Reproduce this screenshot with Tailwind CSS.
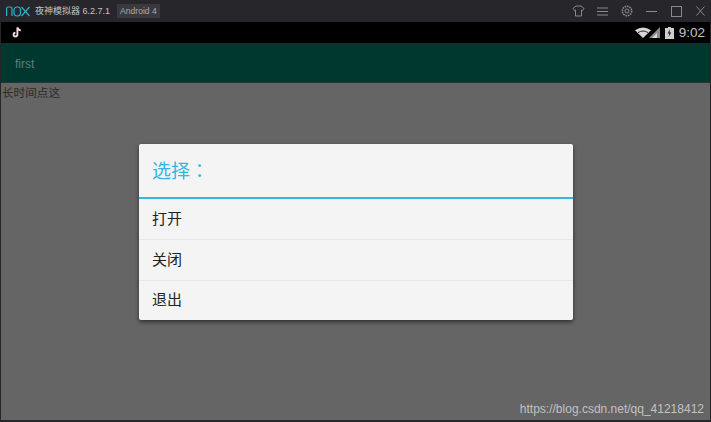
<!DOCTYPE html>
<html><head><meta charset="utf-8"><script src="https://cdn.jsdelivr.net/npm/@tailwindcss/browser@4"></script></head>
<body class="m-0 overflow-hidden">
<div class="relative flex flex-col w-[711px] h-[422px] overflow-hidden bg-[#26262b] font-['Liberation_Sans','Noto_Sans_CJK_SC',sans-serif]">
  <!-- Title bar -->
  <div class="flex items-center h-[22px] shrink-0 pl-[6px]">
    <svg width="24" height="11" viewBox="0 0 24 11" fill="none" stroke="#27b3c6" stroke-width="1.2"><path d="M0.6 10V2.5Q0.6 1 2.2 1H4Q6 1 6 3V10"/><rect x="8" y="1" width="6.5" height="9" rx="3"/><path d="M15.5 1L23.5 10M23.5 1L15.5 10"/></svg>
    <span class="ml-[5px] text-[9px] leading-[22px] text-[#c4c4c6] whitespace-nowrap">夜神模拟器 6.2.7.1</span>
    <span class="ml-[7px] px-[3px] h-[14px] leading-[14px] bg-[#3a3a3e] text-[8.6px] text-[#a9a9ac] whitespace-nowrap">Android 4</span>
    <div class="ml-auto flex items-center h-full text-[#8a8a8e]">
      <svg class="mr-[12px]" width="13" height="12" viewBox="0 0 13 12" fill="none" stroke="currentColor"><path d="M4 1H9L12 3.5L10.5 5.5L9.5 5V11H3.5V5L2.5 5.5L1 3.5Z"/></svg>
      <svg class="mr-[13px]" width="11" height="9" viewBox="0 0 11 9" fill="none" stroke="currentColor"><path d="M0 1H11M0 4.5H11M0 8H11"/></svg>
      <svg class="mr-[13px]" width="12" height="12" viewBox="0 0 12 12" fill="none" stroke="currentColor"><circle cx="6" cy="6" r="2"/><circle cx="6" cy="6" r="4.7" stroke-width="1.6" stroke-dasharray="1.6 0.8"/></svg>
      <svg class="mr-[14px]" width="11" height="9" viewBox="0 0 11 9" fill="none" stroke="currentColor"><path d="M0 4.5H11"/></svg>
      <svg class="mr-[14px]" width="11" height="11" viewBox="0 0 11 11" fill="none" stroke="currentColor"><rect x="0.5" y="0.5" width="10" height="10"/></svg>
      <svg class="mr-[6px]" width="9" height="10" viewBox="0 0 9 10" fill="none" stroke="currentColor"><path d="M0.5 0.5L8.5 9.5M8.5 0.5L0.5 9.5"/></svg>
    </div>
  </div>
  <!-- Android screen -->
  <div class="relative flex flex-col mx-px h-[398px] shrink-0 bg-[#656565]">
    <div class="flex items-center h-[21px] shrink-0 bg-black pl-[10px] pr-[5px]">
      <svg width="12" height="13" viewBox="0 0 12 13"><path d="M6.4 1.5V8.6A1.9 1.9 0 1 1 4.4 6.7" fill="none" stroke="#f0d8de" stroke-width="1.9"/><path d="M6.6 1.5Q7 4 9.8 4.4" fill="none" stroke="#f0d8de" stroke-width="1.7"/></svg>
      <div class="ml-auto flex items-center">
        <svg width="16" height="11" viewBox="0 0 16 11"><path d="M0 3.2Q8 -2.2 16 3.2L8 11Z" fill="#d8d8d8"/><path d="M3 5.6Q8 2.4 13 5.6" fill="none" stroke="#000" stroke-width="0.8"/></svg>
        <svg class="-ml-[2px]" width="11" height="11" viewBox="0 0 11 11"><path d="M0 11L11 0V11Z" fill="#8a8a8a"/><path d="M3 11L8 6V11Z" fill="#d8d8d8"/></svg>
        <svg class="ml-[5px]" width="9" height="12" viewBox="0 0 9 12"><path d="M3 0H6V1H9V12H0V1H3Z" fill="#cfcfcf"/><path d="M5 2L2.6 6.5H4.2L3.6 10L6.2 5.5H4.6Z" fill="#222"/></svg>
        <span class="ml-[5px] text-[13.5px] leading-[21px] text-[#c4c4c4] whitespace-nowrap">9:02</span>
      </div>
    </div>
    <div class="flex items-center h-[40px] shrink-0 bg-[#00372e] pl-[14px] pt-[2px] text-[12px] text-[#5f8079] border-b border-[#2c3533]">first</div>
    <div class="pl-px pt-px text-[11.6px] leading-[18px] text-[#2a2a2a]">长时间点这</div>
    <!-- Dialog -->
    <div class="absolute left-[138px] top-[122px] w-[434px] h-[176px] flex flex-col bg-[#f4f4f4] rounded-[2px] shadow-[0_2px_4px_rgba(0,0,0,0.55)]">
      <div class="flex items-center h-[55px] shrink-0 pl-[13px] pt-[3px] text-[19px] text-[#33b5e5] border-b-[2px] border-[#33b5e5] font-['Liberation_Sans','Noto_Sans_CJK_TC',sans-serif]">选择：</div>
      <div class="flex items-center h-[41px] shrink-0 pl-[13px] text-[15px] text-[#222] border-b border-[#e8e8e8]">打开</div>
      <div class="flex items-center h-[41px] shrink-0 pl-[13px] text-[15px] text-[#222] border-b border-[#e8e8e8]">关闭</div>
      <div class="flex items-center h-[39px] shrink-0 pl-[13px] text-[15px] text-[#222]">退出</div>
    </div>
    <div class="absolute right-[6px] bottom-[3px] text-[12px] leading-[16px] text-[#c2c2c2] whitespace-nowrap">https://blog.csdn.net/qq_41218412</div>
  </div>
</div>
</body></html>
